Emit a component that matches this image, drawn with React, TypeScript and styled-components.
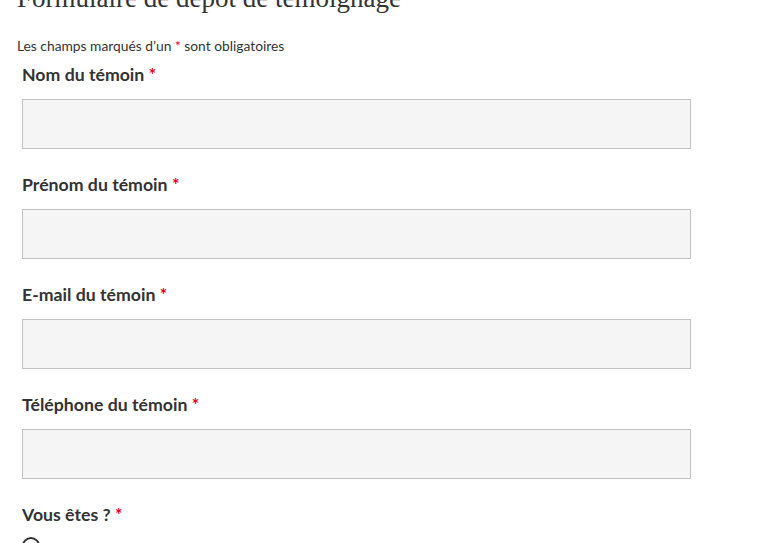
import React from 'react';
import styled, { createGlobalStyle } from 'styled-components';

const GlobalStyle = createGlobalStyle`
	body {
		margin: 0;
		background: #ffffff;
		font-family: Lato, 'Open Sans', sans-serif;
		color: #333333;
	}
`;

const fields = [
	{ id: 'nom', label: 'Nom du témoin', type: 'text' },
	{ id: 'prenom', label: 'Prénom du témoin', type: 'text' },
	{ id: 'email', label: 'E-mail du témoin', type: 'email' },
	{ id: 'tel', label: 'Téléphone du témoin', type: 'tel' },
];

export default function App() {
	return (
		<Page>
			<GlobalStyle />
			<Title>Formulaire de dépôt de témoignage</Title>
			<Intro>
				Les champs marqués d’un <Required>*</Required> sont obligatoires
			</Intro>
			<Form>
				{fields.map((f) => (
					<Field key={f.id}>
						<Label htmlFor={f.id}>
							{f.label} <Required>*</Required>
						</Label>
						<Input id={f.id} type={f.type} />
					</Field>
				))}
				<Field>
					<Label as="span">
						Vous êtes ? <Required>*</Required>
					</Label>
					<RadioRow>
						<Radio />
					</RadioRow>
				</Field>
			</Form>
		</Page>
	);
}

const Page = styled.div`
	padding: 0 17px;
	height: 543px;
	overflow: hidden;
`;
const Title = styled.h1`
	font-family: 'Liberation Serif', 'DejaVu Serif', serif;
	font-weight: 400;
	font-size: 27px;
	line-height: 30px;
	margin: -17px 0 0;
	color: #333333;
`;
const Intro = styled.p`
	font-size: 13.8px;
	line-height: 18px;
	margin: 24px 0 0;
	color: #333333;
`;
const Required = styled.span`
	color: #e2001a;
`;
const Form = styled.div`
	display: flex;
	flex-direction: column;
	padding-left: 5px;
	margin-top: 6px;
`;
const Field = styled.div`
	display: flex;
	flex-direction: column;
	margin-bottom: 22px;
`;
const Label = styled.label`
	font-size: 17.7px;
	font-weight: 700;
	line-height: 28px;
	color: #333333;
	margin-bottom: 10px;
`;
const Input = styled.input`
	box-sizing: border-box;
	width: 669px;
	height: 50px;
	border: 1px solid #c2c2c2;
	background: #f5f5f5;
	padding: 0 12px;
	font-family: Lato, sans-serif;
	font-size: 16px;
`;
const RadioRow = styled.div`
	display: flex;
	align-items: center;
	gap: 8px;
`;
const Radio = styled.span`
	display: inline-block;
	box-sizing: border-box;
	width: 18px;
	height: 18px;
	border: 2px solid #333333;
	border-radius: 50%;
	margin-top: -2px;
`;
